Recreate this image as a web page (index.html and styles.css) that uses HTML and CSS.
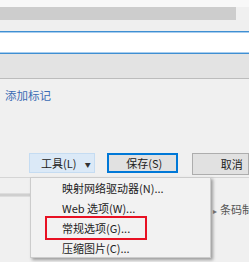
FILE: index.html
```html
<!DOCTYPE html>
<html lang="zh-CN">
<head>
    <meta charset="UTF-8">
    <title>工具菜单</title>
    <link rel="stylesheet" href="styles.css">
</head>
<body>
    <div class="dialog">
        <div class="top-strip"></div>
        <div class="title-row">
            <div class="title-fill"></div>
        </div>
        <div class="spacer"></div>
        <div class="name-field"></div>
        <div class="tag-band"></div>
        <div class="link-area">
            <a href="#" class="add-tag">添加标记</a>
        </div>
        <div class="button-row">
            <button class="btn tools-btn">工具(L)<span class="arrow">▼</span></button>
            <button class="btn save-btn">保存(S)</button>
            <button class="btn cancel-btn">取消</button>
        </div>
        <div class="lower-panel">
            <div class="panel-shade"></div>
            <div class="barcode"><span class="bullet">▸</span>条码制</div>
        </div>

        <ul class="tools-menu">
            <li>映射网络驱动器(N)...</li>
            <li>Web 选项(W)...</li>
            <li class="marked">常规选项(G)...</li>
            <li>压缩图片(C)...</li>
        </ul>
    </div>
</body>
</html>
```

FILE: styles.css
```css
* {
    margin: 0;
    padding: 0;
    box-sizing: border-box;
}

body {
    width: 249px;
    height: 262px;
    overflow: hidden;
    background-color: #f0f0f0;
    font-family: "Noto Sans CJK SC", "Open Sans", sans-serif;
    font-size: 11px;
    color: #222;
}

.dialog {
    position: relative;
    height: 262px;
}

.top-strip {
    height: 7px;
    background-color: #f8f8f8;
}

.title-row {
    height: 13px;
    background-color: #f0f0f0;
}

.title-fill {
    width: 236px;
    height: 100%;
    background-color: #cdcdcd;
}

.spacer {
    height: 11px;
    background-color: #efefef;
}

.name-field {
    height: 23px;
    background-color: #ffffff;
    border-top: 1px solid #3f8fd2;
    border-bottom: 1px solid #3f8fd2;
    box-shadow: inset 0 1px 0 #a8cdee, inset 0 -1px 0 #a8cdee;
}

.tag-band {
    height: 25px;
    background-color: #e3e3e3;
    border-bottom: 1px solid #bcbcbc;
}

.link-area {
    height: 74px;
    padding: 8px 0 0 5px;
}

.add-tag {
    color: #3b6cb4;
    text-decoration: none;
    font-size: 11.5px;
    line-height: 14px;
}

.button-row {
    display: flex;
    align-items: flex-start;
    padding-left: 29px;
    height: 24px;
}

.btn {
    height: 20px;
    font-family: inherit;
    font-size: 11px;
    color: #222;
    background-color: #e1e1e1;
    border: 1px solid #adadad;
    line-height: 16px;
}

.tools-btn {
    width: 71px;
    background-color: #dbe9f7;
    border-color: #c5dcf2;
    text-align: left;
    padding-left: 11px;
    position: relative;
}

.arrow {
    position: absolute;
    right: 3px;
    top: 3px;
    font-size: 6px;
    color: #333;
}

.save-btn {
    width: 77px;
    margin-left: 12px;
    border: 2px solid #0078d7;
    padding-left: 4px;
}

.cancel-btn {
    width: 60px;
    margin-left: 14px;
    height: 22px;
    text-align: left;
    padding-left: 28px;
}

.lower-panel {
    position: relative;
    border-top: 1px solid #d5d5d5;
    height: 84px;
    background-color: #f0f0f0;
    padding: 24px 0 0 213px;
}

.panel-shade {
    position: absolute;
    left: 0;
    top: 15px;
    width: 40px;
    height: 4px;
    background: linear-gradient(to bottom, #e4e4e4, #c8c8c8, #e4e4e4);
}

.barcode {
    color: #555;
    line-height: 14px;
    white-space: nowrap;
}

.bullet {
    font-size: 8px;
    margin-right: 3px;
    color: #777;
}

.tools-menu {
    position: absolute;
    left: 30px;
    top: 177px;
    width: 181px;
    height: 81px;
    list-style: none;
    background-color: #f2f2f2;
    border: 1px solid #cccccc;
    box-shadow: 2px 2px 3px rgba(0, 0, 0, 0.35);
}

.tools-menu li {
    height: 20px;
    line-height: 20px;
    padding-left: 31px;
    white-space: nowrap;
}

.tools-menu .marked {
    position: relative;
}

.tools-menu .marked::before {
    content: "";
    position: absolute;
    left: 14px;
    top: -2px;
    width: 98px;
    height: 20px;
    border: 2px solid #e81123;
}
```
